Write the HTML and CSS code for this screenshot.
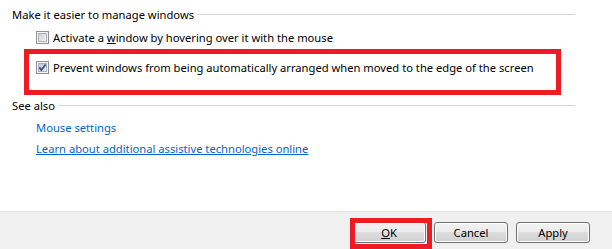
FILE: index.html
```html
<!DOCTYPE html>
<html>
<head>
<meta charset="utf-8">
<link rel="stylesheet" href="styles.css">
</head>
<body>
<div class="main">
  <div class="group-head"><span class="group-title">Make it easier to manage windows</span><span class="rule"></span></div>
  <div class="option opt-first">
    <svg class="cb" width="13" height="13" viewBox="0 0 13 13"><defs><linearGradient id="g1" x1="0" y1="0" x2="1" y2="1"><stop offset="0" stop-color="#cbcbcb"/><stop offset="1" stop-color="#f7f7f7"/></linearGradient></defs><rect x="0.5" y="0.5" width="12" height="12" fill="#f4f4f4" stroke="#8e8f8f"/><rect x="2.5" y="2.5" width="8" height="8" fill="url(#g1)" stroke="#b1b4b9"/></svg>
    <span class="label">Activate a <u>w</u>indow by hovering over it with the mouse</span>
  </div>
  <div class="highlight-row">
    <div class="option">
      <svg class="cb" width="13" height="13" viewBox="0 0 13 13"><defs><linearGradient id="g2" x1="0" y1="0" x2="1" y2="1"><stop offset="0" stop-color="#b9c3d3"/><stop offset="1" stop-color="#eef1f6"/></linearGradient></defs><rect x="0.5" y="0.5" width="12" height="12" fill="#f4f4f4" stroke="#8e8f8f"/><rect x="2.5" y="2.5" width="8" height="8" fill="url(#g2)" stroke="#aab2c0"/><path d="M3.3 6.4 L5.4 9 L9.6 3.4" fill="none" stroke="#3a4b86" stroke-width="1.7"/></svg>
      <span class="label">Prevent windows from being automatically arranged when moved to the edge of the screen</span>
    </div>
  </div>
  <div class="group-head see-also"><span class="group-title">See also</span><span class="rule"></span></div>
  <div class="link-row link-first"><a class="link">Mouse settings</a></div>
  <div class="link-row link-second"><a class="link link-hover">Learn about additional assistive technologies online</a></div>
</div>
<div class="footer">
  <div class="btn-wrap">
    <button class="btn"><u>O</u>K</button>
    <span class="btn-highlight"></span>
  </div>
  <button class="btn">Cancel</button>
  <button class="btn">Apply</button>
</div>
</body>
</html>
```
FILE: styles.css
```css
html, body {
  margin: 0;
  padding: 0;
  background: #ffffff;
}
body {
  width: 612px;
  height: 249px;
  overflow: hidden;
  font-family: "Noto Sans", "Open Sans", sans-serif;
  font-size: 11.2px;
  color: #000000;
}
.main {
  height: 211px;
  box-sizing: border-box;
  padding: 7px 37px 0 12px;
}
.group-head {
  height: 15px;
  display: flex;
  align-items: center;
  gap: 3px;
}
.group-title {
  line-height: 15px;
  white-space: nowrap;
}
.rule {
  flex: 1;
  height: 0;
  border-top: 1px solid #d5d5d5;
}
.option {
  height: 15px;
  display: flex;
  align-items: center;
  gap: 4px;
}
.opt-first {
  margin-top: 8px;
  margin-left: 24px;
}
.label {
  line-height: 15px;
  white-space: nowrap;
}
.cb {
  display: block;
  flex: none;
}
.highlight-row {
  margin-top: 4px;
  margin-left: 12px;
  width: 537px;
  height: 46px;
  box-sizing: border-box;
  border: 5px solid #ed1c24;
  padding: 6px 0 0 7px;
}
.see-also {
  margin-top: 3px;
}
.link-row {
  height: 15px;
  margin-left: 24px;
  line-height: 15px;
}
.link-first {
  margin-top: 7px;
}
.link-second {
  margin-top: 6px;
}
.link {
  color: #0066cc;
  text-decoration: none;
  white-space: nowrap;
}
.link-hover {
  text-decoration: underline;
}
.footer {
  height: 38px;
  box-sizing: border-box;
  border-top: 1px solid #dfdfdf;
  background: #f0f0f0;
  display: flex;
  justify-content: flex-end;
  align-items: flex-start;
  gap: 8px;
  padding: 10px 22px 0 0;
}
.btn-wrap {
  position: relative;
  width: 74px;
  height: 21px;
}
.btn {
  width: 74px;
  height: 21px;
  box-sizing: border-box;
  margin: 0;
  padding: 0;
  border: 1px solid #707070;
  border-radius: 3px;
  background: linear-gradient(#f2f2f2 0%, #ebebeb 50%, #dddddd 50%, #cfcfcf 100%);
  box-shadow: inset 0 0 0 1px #fcfcfc;
  font-family: "Noto Sans", "Open Sans", sans-serif;
  font-size: 11.2px;
  line-height: 17px;
  color: #000000;
}
.btn-highlight {
  position: absolute;
  left: -2px;
  top: -4px;
  width: 82px;
  height: 31px;
  box-sizing: border-box;
  border: 5px solid #ed1c24;
}
```
